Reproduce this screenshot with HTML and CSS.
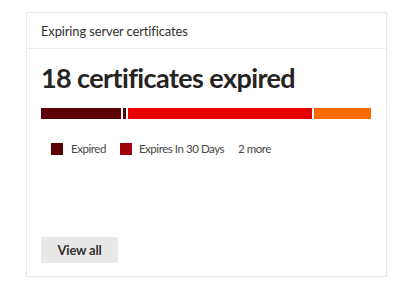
FILE: index.html
```html
<!DOCTYPE html>
<html lang="en">
<head>
    <meta charset="UTF-8">
    <meta name="viewport" content="width=device-width, initial-scale=1.0">
    <title>Expiring server certificates</title>
    <link rel="stylesheet" href="styles.css">
</head>
<body>
    <div class="card">
        <div class="card-header">Expiring server certificates</div>

        <div class="card-body">
            <h2 class="headline">18 certificates expired</h2>

            <div class="stack-bar">
                <span class="seg seg-expired" style="flex: 81"></span>
                <span class="seg seg-expired" style="flex: 3"></span>
                <span class="seg seg-30days" style="flex: 185"></span>
                <span class="seg seg-other" style="flex: 58"></span>
            </div>

            <div class="legend">
                <span class="legend-item"><span class="swatch swatch-expired"></span>Expired</span>
                <span class="legend-item"><span class="swatch swatch-30days"></span>Expires In 30 Days</span>
                <span class="legend-more">2 more</span>
            </div>

            <div class="card-footer">
                <button type="button" class="btn">View all</button>
            </div>
        </div>
    </div>
</body>
</html>
```

FILE: styles.css
```css
body {
    font-family: Lato, "Open Sans", sans-serif;
    background-color: #fff;
    color: #323130;
    margin: 0;
    padding: 0;
}
.card {
    box-sizing: border-box;
    width: 361px;
    height: 265px;
    margin: 12px 0 0 26px;
    border: 1px solid #e6e6e6;
    box-shadow: 0 1px 2px rgba(0, 0, 0, 0.06);
    display: flex;
    flex-direction: column;
}
.card-header {
    height: 35px;
    padding: 0 14px;
    border-bottom: 1px solid #eeeeee;
    display: flex;
    align-items: center;
    font-size: 13px;
    letter-spacing: -0.15px;
}
.card-body {
    flex: 1;
    padding: 0 14px 13px;
    display: flex;
    flex-direction: column;
}
.headline {
    margin: 11px 0 0;
    font-size: 27px;
    line-height: 36px;
    font-weight: bold;
    letter-spacing: -0.6px;
    color: #252423;
}
.stack-bar {
    display: flex;
    gap: 2px;
    height: 11px;
    margin-top: 12px;
    margin-right: 1px;
}
.seg {
    display: block;
}
.seg-expired {
    background-color: #5c0008;
}
.seg-30days {
    background-color: #e60000;
}
.seg-other {
    background-color: #f76b00;
}
.legend {
    display: flex;
    align-items: center;
    margin-top: 23px;
    padding-left: 10px;
    font-size: 11.5px;
    line-height: 14px;
    letter-spacing: -0.45px;
    color: #484644;
}
.legend-item {
    display: flex;
    align-items: center;
    margin-right: 14px;
}
.swatch {
    width: 12px;
    height: 12px;
    margin-right: 8px;
}
.swatch-30days {
    margin-right: 7px;
}
.swatch-expired {
    background-color: #5c0008;
}
.swatch-30days {
    background-color: #a4000b;
}
.card-footer {
    margin-top: auto;
}
.btn {
    width: 77px;
    height: 26px;
    background-color: #e8e8e8;
    border: none;
    border-radius: 2px;
    color: #323130;
    font-family: inherit;
    font-size: 13px;
    font-weight: bold;
    letter-spacing: -0.2px;
    padding: 0;
}
```
